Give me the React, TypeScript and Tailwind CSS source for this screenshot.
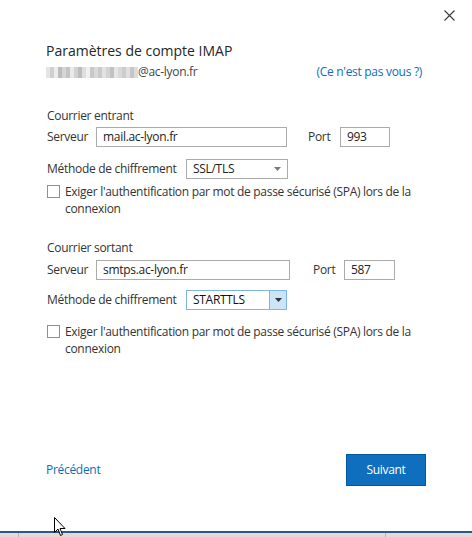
import React from "react";

const blurBlocks = [
  "#e4e4e4", "#cfcfcf", "#ececec", "#bdbdbd", "#d6d6d6", "#c4c4c4", "#e9e9e9", "#d1d1d1",
  "#bcbcbc", "#dedede", "#f0f0f0", "#c9c9c9", "#dadada", "#cacaca", "#e2e2e2", "#d3d3d3",
  "#c2c2c2", "#e6e6e6", "#d9d9d9", "#cdcdcd", "#e0e0e0", "#c6c6c6", "#dcdcdc",
];

const TextBox = ({ value, w }: { value: string; w: string }) => (
  <div
    className={`${w} h-[20px] border border-[#ababab] bg-white flex items-center pl-[6px] text-[12px] text-[#222]`}
  >
    {value}
  </div>
);

const Checkbox = () => (
  <div className="flex items-start">
    <div className="w-[13px] h-[13px] border border-[#8f8f8f] bg-white mt-[2px] shrink-0" />
    <div className="ml-[5px] leading-[17px] text-[#333]">
      Exiger l'authentification par mot de passe sécurisé (SPA) lors de la
      <br />
      connexion
    </div>
  </div>
);

export default function App() {
  return (
    <div
      className="relative w-[472px] h-[537px] bg-white flex flex-col overflow-hidden whitespace-nowrap text-[12px] tracking-[-0.3px]"
      style={{ fontFamily: '"Open Sans", "Noto Sans", sans-serif' }}
    >
      {/* close */}
      <div className="h-[41px] flex justify-end items-start pt-[10px] pr-[17px]">
        <svg width="11" height="11" viewBox="0 0 11 11">
          <path d="M0.5 0.5 L10.5 10.5 M10.5 0.5 L0.5 10.5" stroke="#3a3a3a" strokeWidth="1.1" />
        </svg>
      </div>

      <div className="px-[46px] flex flex-col">
        <div className="h-[20px] leading-[20px] text-[14px] tracking-normal text-[#262626]">
          Paramètres de compte IMAP
        </div>
        <div className="mt-[2px] h-[18px] flex items-center">
          <div className="flex h-[11px]">
            {blurBlocks.map((c, i) => (
              <div key={i} className="w-[4px] h-full" style={{ backgroundColor: c }} />
            ))}
          </div>
          <span className="text-[#444]">@ac-lyon.fr</span>
          <span className="ml-auto mr-[4px] text-[#0f6cbd]">(Ce n'est pas vous ?)</span>
        </div>

        {/* incoming */}
        <div className="mt-[27px] h-[16px] leading-[16px] text-[#333] pl-[1px]">
          Courrier entrant
        </div>
        <div className="mt-[3px] flex items-center text-[#333] pl-[1px]">
          <span className="w-[49px]">Serveur</span>
          <TextBox value="mail.ac-lyon.fr" w="w-[191px]" />
          <span className="ml-[21px] w-[32px]">Port</span>
          <TextBox value="993" w="w-[50px]" />
        </div>
        <div className="mt-[12px] flex items-center text-[#333] pl-[1px]">
          <span className="w-[139px]">Méthode de chiffrement</span>
          <div className="w-[102px] h-[20px] border border-[#ababab] flex items-center">
            <span className="flex-1 pl-[6px] text-[12px] text-[#222]">SSL/TLS</span>
            <span className="w-[19px] flex justify-center">
              <svg width="7" height="4" viewBox="0 0 7 4">
                <path d="M0 0 H7 L3.5 4 Z" fill="#7a7a7a" />
              </svg>
            </span>
          </div>
        </div>
        <div className="mt-[4px] pl-[1px]">
          <Checkbox />
        </div>

        {/* outgoing */}
        <div className="mt-[23px] h-[16px] leading-[16px] text-[#333] pl-[1px]">
          Courrier sortant
        </div>
        <div className="mt-[4px] flex items-center text-[#333] pl-[1px]">
          <span className="w-[49px]">Serveur</span>
          <TextBox value="smtps.ac-lyon.fr" w="w-[194px]" />
          <span className="ml-[23px] w-[31px]">Port</span>
          <TextBox value="587" w="w-[51px]" />
        </div>
        <div className="mt-[10px] flex items-center text-[#333] pl-[1px]">
          <span className="w-[139px]">Méthode de chiffrement</span>
          <div className="w-[101px] h-[20px] border border-[#7eb4ea] flex items-stretch">
            <span className="flex-1 pl-[6px] flex items-center text-[12px] text-[#111]">STARTTLS</span>
            <span className="w-[17px] bg-[#cce4f7] border-l border-[#7eb4ea] flex items-center justify-center">
              <svg width="7" height="4" viewBox="0 0 7 4">
                <path d="M0 0 H7 L3.5 4 Z" fill="#333" />
              </svg>
            </span>
          </div>
        </div>
        <div className="mt-[13px] pl-[1px]">
          <Checkbox />
        </div>
      </div>

      {/* footer */}
      <div className="mt-auto mb-[45px] px-[46px] flex items-center justify-between">
        <span className="text-[#0f6cbd]">Précédent</span>
        <button className="w-[80px] h-[32px] bg-[#106ebe] border border-[#005a9e] text-white text-[12px]">
          Suivant
        </button>
      </div>

      {/* taskbar edge */}
      <div className="h-[6px] border-t-2 border-[#2d5a80] bg-[#dcdcdc] flex">
        <div className="ml-[18px] w-px bg-[#b8b8b8]" />
        <div className="ml-[366px] w-px bg-[#b8b8b8]" />
      </div>

      {/* mouse cursor */}
      <svg
        className="absolute left-[54px] top-[517px]"
        width="12"
        height="20"
        viewBox="0 0 12 20"
      >
        <path
          d="M0.5 0.5 L0.5 15.5 L4 12 L6.5 18.5 L8.5 17.5 L6 11.5 L11 11.5 Z"
          fill="white"
          stroke="black"
          strokeWidth="1"
          strokeLinejoin="round"
        />
      </svg>
    </div>
  );
}
